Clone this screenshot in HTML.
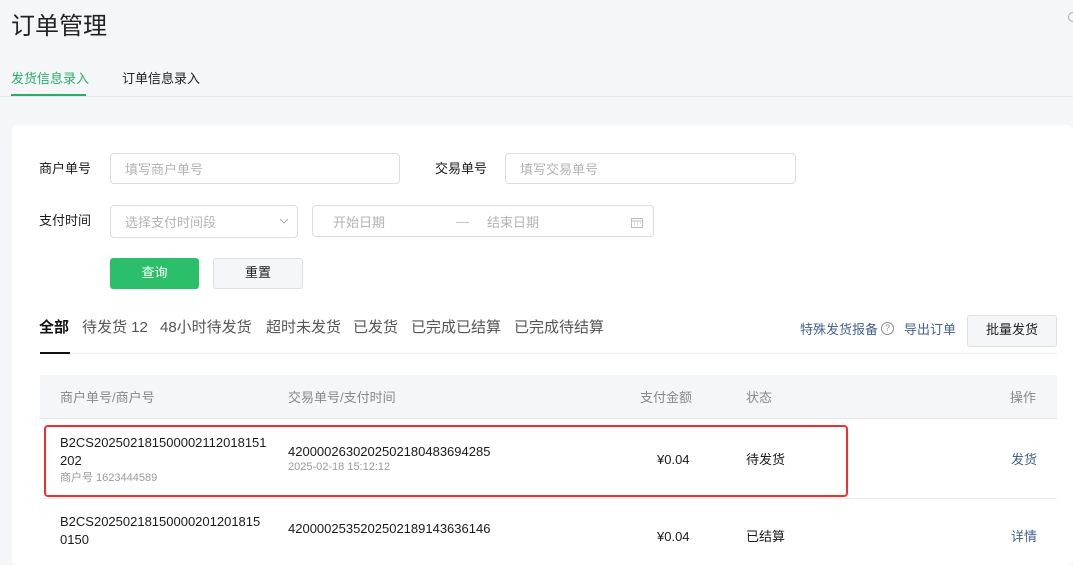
<!DOCTYPE html>
<html><head><meta charset="utf-8"><style>
*{margin:0;padding:0;box-sizing:border-box}
body{width:1073px;height:538px;overflow:hidden;background:#f5f6f8;font-family:"Liberation Sans","Noto Sans CJK SC",sans-serif;position:relative;color:#1a1a1a}
.a{position:absolute;white-space:nowrap}
.inp{position:absolute;border:1px solid #dcdcdc;border-radius:4px;background:#fff;font-size:13px;color:#b3b3b3;padding-left:14px;display:flex;align-items:center}
.lbl{position:absolute;font-size:13px;color:#1a1a1a}
.tab{font-size:15px;color:#555}
</style></head><body>
<div class="a" style="left:11px;top:6px;font-size:24px;color:#222">订单管理</div>
<div class="a" style="left:1068px;top:12px;width:10px;height:10px;border:1px solid #aaa;border-radius:50%"></div>
<div class="a" style="left:11px;top:68px;font-size:13px;color:#2aae67">发货信息录入</div>
<div class="a" style="left:11px;top:94px;width:75px;height:2px;background:#2aae67"></div>
<div class="a" style="left:122px;top:68px;font-size:13px;color:#222">订单信息录入</div>
<div class="a" style="left:0;top:96px;width:1073px;height:1px;background:#e5e6e8"></div>
<div class="a" style="left:12px;top:125px;width:1061px;height:440px;background:#fff;border-radius:6px"></div>

<div class="lbl" style="left:39px;top:158px">商户单号</div>
<div class="inp" style="left:110px;top:153px;width:290px;height:31px">填写商户单号</div>
<div class="lbl" style="left:435px;top:158px">交易单号</div>
<div class="inp" style="left:505px;top:153px;width:291px;height:31px">填写交易单号</div>
<div class="lbl" style="left:39px;top:210px">支付时间</div>
<div class="inp" style="left:110px;top:205px;width:188px;height:33px">选择支付时间段
<svg style="position:absolute;right:8px;top:12px" width="10" height="7"><path d="M1 1l4 4 4-4" fill="none" stroke="#aaa"/></svg></div>
<div class="inp" style="left:312px;top:205px;width:342px;height:32px;padding-left:20px">开始日期
<span style="position:absolute;left:143px;color:#bbb">—</span><span style="position:absolute;left:174px">结束日期</span>
<svg style="position:absolute;right:10px;top:11px" width="12" height="11"><rect x="0.5" y="1.5" width="11" height="9" fill="none" stroke="#bbb"/><path d="M0 4h12M3 6h1M6 6h1M9 6h1M3 8h1M6 8h1" stroke="#bbb"/></svg></div>
<div class="a" style="left:110px;top:258px;width:89px;height:31px;background:#2bbf6a;border-radius:3px;color:#fff;font-size:13px;text-align:center;line-height:29px">查询</div>
<div class="a" style="left:213px;top:258px;width:90px;height:31px;background:#f5f6f8;border:1px solid #e0e0e0;border-radius:3px;color:#222;font-size:13px;text-align:center;line-height:27px">重置</div>

<div class="a tab" style="left:39px;top:316px;color:#111;font-weight:bold">全部</div>
<div class="a tab" style="left:82px;top:316px">待发货 12</div>
<div class="a tab" style="left:160px;top:316px">48小时待发货</div>
<div class="a tab" style="left:266px;top:316px">超时未发货</div>
<div class="a tab" style="left:353px;top:316px">已发货</div>
<div class="a tab" style="left:411px;top:316px">已完成已结算</div>
<div class="a tab" style="left:514px;top:316px">已完成待结算</div>
<div class="a" style="left:40px;top:352px;width:30px;height:2px;background:#111"></div>
<div class="a" style="left:70px;top:353px;width:987px;height:1px;background:#eee"></div>
<div class="a" style="left:800px;top:319px;font-size:13px;color:#45628f">特殊发货报备</div>
<div class="a" style="left:881px;top:322px;width:13px;height:13px;border:1px solid #888;border-radius:50%;font-size:9px;color:#888;text-align:center;line-height:11px">?</div>
<div class="a" style="left:904px;top:319px;font-size:13px;color:#45628f">导出订单</div>
<div class="a" style="left:967px;top:315px;width:90px;height:32px;background:#f5f6f8;border:1px solid #e0e0e0;border-radius:3px;font-size:13px;text-align:center;line-height:28px;color:#222">批量发货</div>

<div class="a" style="left:40px;top:375px;width:1017px;height:44px;background:#f5f6f8;border-bottom:1px solid #e8e8e8"></div>
<div class="a" style="left:60px;top:387px;font-size:13px;color:#888">商户单号/商户号</div>
<div class="a" style="left:288px;top:387px;font-size:13px;color:#888">交易单号/支付时间</div>
<div class="a" style="left:640px;top:387px;font-size:13px;color:#888">支付金额</div>
<div class="a" style="left:746px;top:387px;font-size:13px;color:#888">状态</div>
<div class="a" style="left:1010px;top:387px;font-size:13px;color:#888">操作</div>

<div class="a" style="left:60px;top:434px;font-size:13px;line-height:18px">B2CS202502181500002112018151<br>202</div>
<div class="a" style="left:60px;top:469px;font-size:11px;color:#999">商户号 1623444589</div>
<div class="a" style="left:288px;top:444px;font-size:13px">4200002630202502180483694285</div>
<div class="a" style="left:288px;top:461px;font-size:11px;color:#999">2025-02-18 15:12:12</div>
<div class="a" style="left:657px;top:452px;font-size:13px">¥0.04</div>
<div class="a" style="left:746px;top:449px;font-size:13px">待发货</div>
<div class="a" style="left:1011px;top:449px;font-size:13px;color:#45628f">发货</div>
<div class="a" style="left:44px;top:425px;width:804px;height:72px;border:2px solid #f03030;border-radius:4px"></div>
<div class="a" style="left:40px;top:498px;width:1017px;height:1px;background:#eee"></div>

<div class="a" style="left:60px;top:513px;font-size:13px;line-height:18px">B2CS20250218150000201201815<br>0150</div>
<div class="a" style="left:288px;top:521px;font-size:13px">4200002535202502189143636146</div>
<div class="a" style="left:657px;top:529px;font-size:13px">¥0.04</div>
<div class="a" style="left:746px;top:526px;font-size:13px">已结算</div>
<div class="a" style="left:1011px;top:526px;font-size:13px;color:#45628f">详情</div>
</body></html>
